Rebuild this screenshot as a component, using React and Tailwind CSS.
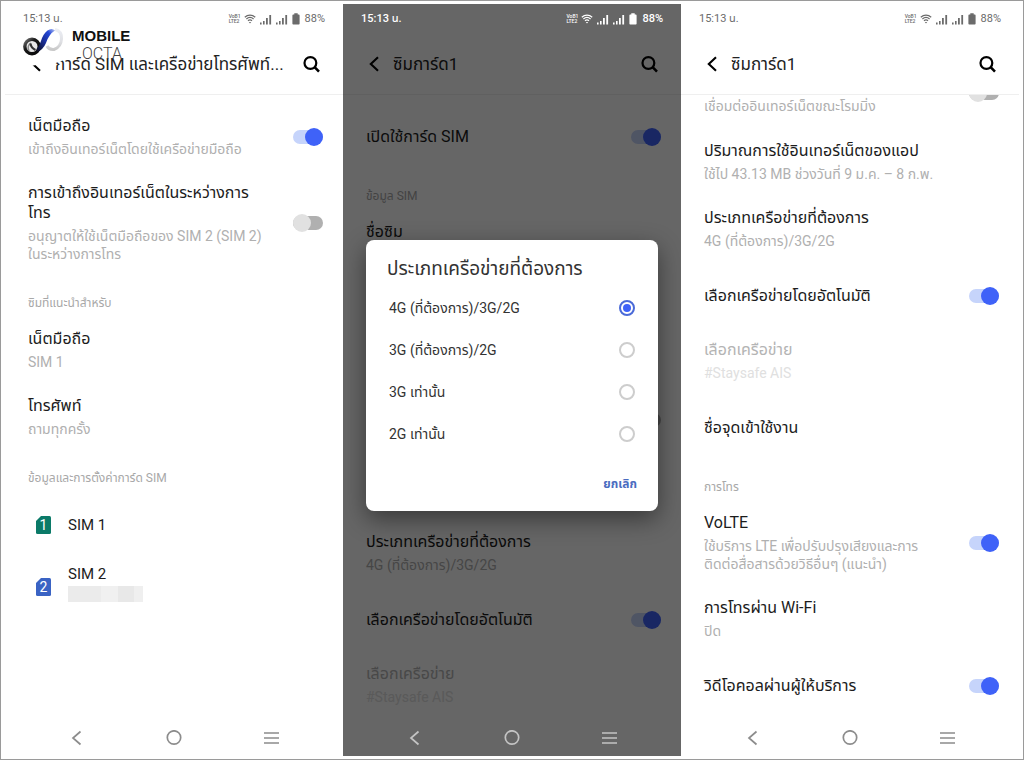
import { useState } from 'react';

const NETWORK_TYPES = ['4G (ที่ต้องการ)/3G/2G', '3G (ที่ต้องการ)/2G', '3G เท่านั้น', '2G เท่านั้น'];

const SignalIcon = () => (
  <svg viewBox="0 0 12 11" className="h-[11px] w-3" fill="currentColor" aria-hidden="true">
    <rect x="0" y="8.5" width="1.6" height="2" />
    <rect x="3" y="7" width="1.6" height="3.5" />
    <rect x="6" y="4" width="1.8" height="6.5" />
    <rect x="9.3" y="1" width="1.8" height="9.5" />
  </svg>
);

const StatusBar = ({ light }) => (
  <div
    className={`relative z-20 flex h-[30px] shrink-0 items-center justify-between px-[18px] text-[11px] ${
      light ? 'font-medium text-white' : 'text-[#6b6b6b]'
    }`}
  >
    <span>15:13 น.</span>
    <div className="flex items-center">
      <span className="mr-[3px] flex flex-col text-[5px] leading-[5px] font-medium">
        <span>VoB1</span>
        <span>LTE2</span>
      </span>
      <svg viewBox="0 0 12 10" className="mr-1 h-[10px] w-3" fill="none" stroke="currentColor" strokeWidth="1.2" aria-hidden="true">
        <path d="M0.8 3.2C3.8 0.4 8.2 0.4 11.2 3.2" />
        <path d="M2.4 5C4.6 3 7.4 3 9.6 5" />
        <path d="M4 6.8C5.2 5.7 6.8 5.7 8 6.8" />
        <path d="M4.8 8L6 9.4L7.2 8Z" fill="currentColor" stroke="none" />
      </svg>
      <span className="flex items-center gap-1">
        <SignalIcon />
        <SignalIcon />
      </span>
      <svg viewBox="0 0 8 12" className="mr-[5px] ml-1 h-3 w-2" fill="currentColor" aria-hidden="true">
        <path d="M2.3 0.3h3.4v1.3h1.1c.5 0 .8.3.8.8v8.3c0 .5-.3.8-.8.8H1.2c-.5 0-.8-.3-.8-.8V2.400c0-.5.3-.8.8-.8h1.100z" />
      </svg>
      <span>88%</span>
    </div>
  </div>
);

const Header = ({ title }) => (
  <header className="flex h-[61px] shrink-0 items-center border-b border-[#00000010] pr-[23px] pl-[26px] text-black">
    <button type="button" aria-label="ย้อนกลับ" className="mr-3.5 shrink-0">
      <svg viewBox="0 0 10 16" className="h-4 w-2.5" fill="none" stroke="currentColor" strokeWidth="2.1">
        <path d="M9 1.200L1.800 8L9 14.800" />
      </svg>
    </button>
    <h2 className="min-w-0 flex-1 text-[17px] leading-6 whitespace-nowrap text-[#222]">{title}</h2>
    <button type="button" aria-label="ค้นหา" className="shrink-0">
      <svg viewBox="0 0 17 17" className="size-[17px]" fill="none" stroke="currentColor">
        <circle cx="7.400" cy="7" r="5.900" strokeWidth="2.200" />
        <path d="M11.600 11.200L16 15.600" strokeWidth="2.600" />
      </svg>
    </button>
  </header>
);

const Switch = ({ defaultOn, ...props }) => (
  <input
    type="checkbox"
    role="switch"
    defaultChecked={defaultOn}
    className="relative h-[18px] w-[30px] shrink-0 appearance-none before:absolute before:inset-x-0 before:top-[2px] before:h-[14px] before:rounded-full before:bg-[#b0b0b0] after:absolute after:top-0 after:left-0 after:size-[18px] after:rounded-full after:bg-[#e1e1e1] checked:before:bg-[#c6d4fb] checked:after:left-3 checked:after:bg-[#3f62f8]"
    {...props}
  />
);

const RowText = ({ title, desc, disabled }) => (
  <span className="min-w-0 flex-1 whitespace-pre-line">
    <span className={`block text-base leading-5 ${disabled ? 'text-[#b4b4b4]' : 'text-[#1c1c1c]'}`}>{title}</span>
    {desc && (
      <span className={`mt-1 block text-sm leading-[18px] ${disabled ? 'text-[#e0e0e0]' : 'text-[#b0b0b0]'}`}>{desc}</span>
    )}
  </span>
);

const Row = ({ title, desc, disabled, toggle }) => {
  const size = desc ? 'pt-3 pb-[13px]' : 'h-[65px]';
  if (toggle) {
    return (
      <label className={`flex items-center pr-5 pl-[23px] ${size}`}>
        <RowText title={title} desc={desc} />
        <Switch defaultOn={toggle === 'on'} />
      </label>
    );
  }
  return (
    <button type="button" disabled={disabled} className={`flex w-full items-center pr-5 pl-[23px] text-left ${size}`}>
      <RowText title={title} desc={desc} disabled={disabled} />
    </button>
  );
};

const SectionLabel = ({ children }) => (
  <h3 className="pt-[18px] pb-[5px] pl-[23px] text-xs leading-[18px] text-[#a8a8a8]">{children}</h3>
);

const SimIcon = ({ number, className }) => (
  <span className={`relative flex h-[18px] w-[15px] items-center justify-center text-sm leading-none text-white ${className}`}>
    <svg viewBox="0 0 15 18" className="absolute inset-0 size-full" aria-hidden="true">
      <path d="M5 0H13.500Q15 0 15 1.500V16.500Q15 18 13.500 18H1.500Q0 18 0 16.500V5Z" fill="var(--color-sim)" />
    </svg>
    <span className="relative">{number}</span>
  </span>
);

const NavBar = ({ light }) => (
  <nav className={`relative z-20 flex h-[37px] shrink-0 items-center justify-around px-[22px] ${light ? 'text-[#c4c4c4]' : 'text-[#8c8c8c]'}`}>
    <button type="button" aria-label="กลับ">
      <svg viewBox="0 0 16 16" className="size-4" fill="none" stroke="currentColor" strokeWidth="1.700">
        <path d="M12.500 1.500L5 8L12.500 14.500" />
      </svg>
    </button>
    <button type="button" aria-label="หน้าหลัก">
      <svg viewBox="0 0 16 16" className="size-4" fill="none" stroke="currentColor" strokeWidth="1.700">
        <circle cx="8" cy="7.500" r="6.700" />
      </svg>
    </button>
    <button type="button" aria-label="เมนู">
      <svg viewBox="0 0 16 16" className="size-4" fill="none" stroke="currentColor" strokeWidth="1.700">
        <path d="M0 3H15M0 8H15M0 13H15" />
      </svg>
    </button>
  </nav>
);

const Phone = ({ title, dark, overlay, children }) => (
  <section className="relative flex min-w-0 flex-col overflow-hidden bg-white">
    <StatusBar light={dark} />
    <Header title={title} />
    <div className="flex-1 overflow-hidden">{children}</div>
    <NavBar light={dark} />
    {overlay}
  </section>
);

// Site watermark stamped over the corner of the first screen
const Watermark = () => (
  <div className="absolute top-[17px] left-[16px] z-30 flex">
    <svg viewBox="0 0 48 50" className="h-[50px] w-12" aria-hidden="true">
      <defs>
        <linearGradient id="blueStroke" x1="0" y1="1" x2="1" y2="0">
          <stop offset="0" stopColor="#0a0a14" />
          <stop offset="0.45" stopColor="#1a2f9c" />
          <stop offset="0.75" stopColor="#2448d8" />
          <stop offset="1" stopColor="#b9c6f2" />
        </linearGradient>
        <linearGradient id="paleRing" x1="0" y1="0" x2="0" y2="1">
          <stop offset="0" stopColor="#eceef4" />
          <stop offset="0.6" stopColor="#dfe0e4" />
          <stop offset="1" stopColor="#c9c9c9" />
        </linearGradient>
        <linearGradient id="darkRing" x1="0" y1="0" x2="1" y2="1">
          <stop offset="0" stopColor="#777" />
          <stop offset="0.35" stopColor="#1a1a1a" />
          <stop offset="1" stopColor="#050505" />
        </linearGradient>
      </defs>
      <path d="M2 14Q12 2 30 3Q48 5 46 30Q45 41 34 42L20 43L10 45L2 42Z" fill="#fff" />
      <path d="M34 8.500Q41 10 40.500 18Q40 26 33 28.500Q28 29 26 25" fill="none" stroke="url(#paleRing)" strokeWidth="3" />
      <circle cx="11" cy="25.500" r="7.200" fill="#e8e8e8" stroke="url(#darkRing)" strokeWidth="3.400" />
      <path d="M8 30Q5.500 25 10 22" fill="none" stroke="#8a8a8a" strokeWidth="1.500" />
      <path d="M9.500 22.500Q10 27 14.500 29" fill="none" stroke="#333" strokeWidth="2.200" />
      <path d="M16 31Q22 29 25 22Q28 13 34 9.500Q31 6.500 26.500 9.500Q22 13 20 20Q18.500 25 15.500 28Z" fill="url(#blueStroke)" />
    </svg>
    <div className="pt-[6px] pl-[3px] text-[#111]">
      <div className="font-['Liberation_Sans'] text-[15px] leading-[18px] font-bold">MOBILE</div>
      <div className="pl-[10px] text-base leading-[18px] font-light text-[#444]">OCTA</div>
    </div>
  </div>
);

const NetworkTypeDialog = () => {
  const [selected, setSelected] = useState(0);

  return (
    <div className="absolute inset-0 z-10 flex items-center bg-black/60 px-[23px] pb-[9px]">
      <div role="dialog" aria-labelledby="network-type" className="w-full rounded-lg bg-white pt-4 pb-[17px] shadow-[0_8px_24px_rgba(0,0,0,0.45)]">
        <h2 id="network-type" className="px-[21px] text-[19px] leading-[26px] text-[#333]">
          ประเภทเครือข่ายที่ต้องการ
        </h2>
        <div className="pt-[5px] pb-[19px]">
          {NETWORK_TYPES.map((type, i) => (
            <label key={type} className="flex h-[42px] items-center justify-between px-[23px] text-sm text-[#333]">
              {type}
              <input
                type="radio"
                name="network"
                checked={selected === i}
                onChange={() => setSelected(i)}
                className="relative size-4 appearance-none rounded-full border-2 border-[#cdcdcd] checked:border-[#4a6ad8] checked:after:absolute checked:after:inset-[2px] checked:after:rounded-full checked:after:bg-[#3f62f8]"
              />
            </label>
          ))}
        </div>
        <div className="flex justify-end px-[21px]">
          <button type="button" className="text-xs leading-5 font-bold text-[#4a6cc0]">
            ยกเลิก
          </button>
        </div>
      </div>
    </div>
  );
};

const App = () => (
  <div className="grid min-h-screen grid-cols-3 border border-[#9a9a9a] bg-white px-1 py-[3px] font-[Roboto,'Noto_Sans_Thai','Noto_Sans',sans-serif]">
    <Phone title="การ์ด SIM และเครือข่ายโทรศัพท์..." overlay={<Watermark />}>
      <div className="pt-[9px]">
        <Row title="เน็ตมือถือ" desc="เข้าถึงอินเทอร์เน็ตโดยใช้เครือข่ายมือถือ" toggle="on" />
        <Row
          title={'การเข้าถึงอินเทอร์เน็ตในระหว่างการ\nโทร'}
          desc={'อนุญาตให้ใช้เน็ตมือถือของ SIM 2 (SIM 2)\nในระหว่างการโทร'}
          toggle="off"
        />
        <SectionLabel>ซิมที่แนะนำสำหรับ</SectionLabel>
        <Row title="เน็ตมือถือ" desc="SIM 1" />
        <Row title="โทรศัพท์" desc="ถามทุกครั้ง" />
        <SectionLabel>ข้อมูลและการตั้งค่าการ์ด SIM</SectionLabel>
        <button type="button" className="flex h-[65px] w-full items-center gap-[17px] pl-[31px] text-left text-[15px] leading-5 text-[#1c1c1c]">
          <SimIcon number="1" className="[--color-sim:#0b7a68]" />
          SIM 1
        </button>
        <button type="button" className="flex h-[60px] w-full items-center gap-[17px] pl-[31px] text-left text-[15px] leading-5 text-[#1c1c1c]">
          <SimIcon number="2" className="[--color-sim:#3a63c4]" />
          <span className="pb-2">
            SIM 2
            {/* phone number is masked out */}
            <span className="mt-0.5 flex h-4 w-[75px]">
              <span className="flex-2 bg-[#ebebeb]" />
              <span className="flex-1 bg-[#f0f0f0]" />
              <span className="flex-1 bg-[#e8e8e8]" />
              <span className="w-[9px] bg-[#efefef]" />
            </span>
          </span>
        </button>
      </div>
    </Phone>

    <Phone title="ซิมการ์ด1" dark overlay={<NetworkTypeDialog />}>
      <div className="pt-[9px]">
        <Row title="เปิดใช้การ์ด SIM" toggle="on" />
        <SectionLabel>ข้อมูล SIM</SectionLabel>
        <div className="h-[310px]">
          <div className="h-[176px] pt-3 pl-[23px] text-base leading-5 text-[#1c1c1c]">ชื่อซิม</div>
          <div className="flex h-[67px] items-center justify-end pr-5">
            <Switch aria-label="โรมมิ่ง" />
          </div>
        </div>
        <Row title="ประเภทเครือข่ายที่ต้องการ" desc="4G (ที่ต้องการ)/3G/2G" />
        <Row title="เลือกเครือข่ายโดยอัตโนมัติ" toggle="on" />
        <Row title="เลือกเครือข่าย" desc="#Staysafe AIS" disabled />
      </div>
    </Phone>

    <Phone title="ซิมการ์ด1">
      {/* list is scrolled, so this row sits half under the header */}
      <label className="flex h-[34px] items-start justify-between pr-5 pl-[23px] text-sm leading-[18px] text-[#b0b0b0]">
        <span className="pt-[2px]">เชื่อมต่ออินเทอร์เน็ตขณะโรมมิ่ง</span>
        <span className="-mt-[11px] flex">
          <Switch />
        </span>
      </label>
      <Row title="ปริมาณการใช้อินเทอร์เน็ตของแอป" desc="ใช้ไป 43.13 MB ช่วงวันที่ 9 ม.ค. – 8 ก.พ." />
      <Row title="ประเภทเครือข่ายที่ต้องการ" desc="4G (ที่ต้องการ)/3G/2G" />
      <Row title="เลือกเครือข่ายโดยอัตโนมัติ" toggle="on" />
      <Row title="เลือกเครือข่าย" desc="#Staysafe AIS" disabled />
      <Row title="ชื่อจุดเข้าใช้งาน" />
      <SectionLabel>การโทร</SectionLabel>
      <Row title="VoLTE" desc={'ใช้บริการ LTE เพื่อปรับปรุงเสียงและการ\nติดต่อสื่อสารด้วยวิธีอื่นๆ (แนะนำ)'} toggle="on" />
      <Row title="การโทรผ่าน Wi-Fi" desc="ปิด" />
      <Row title="วิดีโอคอลผ่านผู้ให้บริการ" toggle="on" />
    </Phone>
  </div>
);

export default App;
